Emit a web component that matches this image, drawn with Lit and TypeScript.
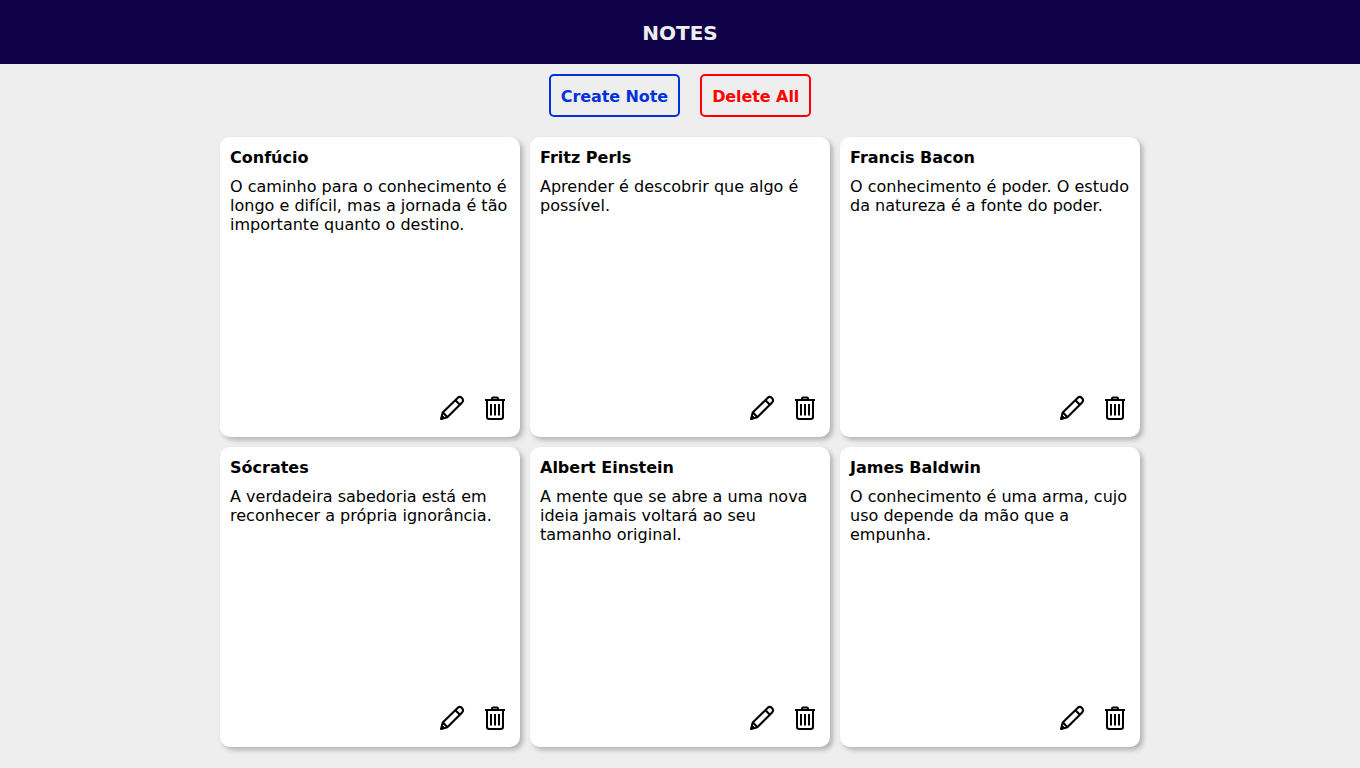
import { LitElement, html, css } from "lit";
import { customElement, property } from "lit/decorators.js";

interface Note {
  title: string;
  text: string;
}

const NOTES: Note[] = [
  { title: "Confúcio", text: "O caminho para o conhecimento é longo e difícil, mas a jornada é tão importante quanto o destino." },
  { title: "Fritz Perls", text: "Aprender é descobrir que algo é possível." },
  { title: "Francis Bacon", text: "O conhecimento é poder. O estudo da natureza é a fonte do poder." },
  { title: "Sócrates", text: "A verdadeira sabedoria está em reconhecer a própria ignorância." },
  { title: "Albert Einstein", text: "A mente que se abre a uma nova ideia jamais voltará ao seu tamanho original." },
  { title: "James Baldwin", text: "O conhecimento é uma arma, cujo uso depende da mão que a empunha." },
];

const pencilIcon = html`<svg width="26" height="26" viewBox="0 0 26 26" fill="none" stroke="#000" stroke-width="2.1" stroke-linejoin="round">
  <path d="M2.1 24L3.7 17.6L18.6 2.9C20 1.7 21.6 1.7 22.9 2.9C24.3 4.3 24.3 6 23.1 7.4L8.3 22.2Z"/>
  <path d="M16.4 5.3L20.7 9.6M3.9 17.6L8.3 22"/>
  <path d="M1.9 24.2L3 20.1L5.9 23.1Z" fill="#000" stroke-width="1"/>
</svg>`;

const trashIcon = html`<svg width="26" height="26" viewBox="0 0 26 26" fill="none" stroke="#000" stroke-width="2">
  <path d="M3 5H23M10 5V3.6Q10 2.4 11.2 2.4H14.8Q16 2.4 16 3.6V5"/>
  <path d="M5 5V21.8Q5 24 7.2 24H18.8Q21 24 21 21.8V5"/>
  <path d="M9 9V20.5M13 9V20.5M17 9V20.5"/>
</svg>`;

@customElement("note-card")
export class NoteCard extends LitElement {
  @property({ attribute: false }) note!: Note;

  static styles = css`
    :host {
      display: flex;
      flex-direction: column;
      box-sizing: border-box;
      height: 300px;
      padding: 10px;
      background: #fff;
      border-radius: 10px;
      box-shadow: 3px 3px 5px rgba(0, 0, 0, 0.25);
      color: #000;
    }
    .title {
      margin: 0 0 8px;
      font-size: 16px;
      line-height: 22px;
      font-weight: 700;
    }
    .text {
      margin: 0;
      flex: 1;
      font-size: 16px;
      line-height: 19px;
      letter-spacing: 0.01px;
    }
    .actions {
      display: flex;
      justify-content: flex-end;
      gap: 17px;
      padding: 0 2px 6px 0;
    }
    button {
      display: block;
      padding: 0;
      border: 0;
      background: none;
      cursor: pointer;
    }
    svg {
      display: block;
    }
  `;

  render() {
    return html`
      <h2 class="title">${this.note.title}</h2>
      <p class="text">${this.note.text}</p>
      <div class="actions">
        <button aria-label="Edit">${pencilIcon}</button>
        <button aria-label="Delete">${trashIcon}</button>
      </div>
    `;
  }
}

@customElement("app-root")
export class AppRoot extends LitElement {
  static styles = css`
    :host {
      display: block;
      min-height: 768px;
      background: #eee;
      font-family: Verdana, "DejaVu Sans", sans-serif;
    }
    .header {
      display: flex;
      align-items: center;
      justify-content: center;
      height: 64px;
      background: #0f0249;
    }
    .heading {
      margin: 0;
      padding-top: 2px;
      font-size: 20px;
      line-height: 24px;
      font-weight: 700;
      color: #eee;
    }
    .toolbar {
      display: flex;
      justify-content: center;
      gap: 20px;
      padding: 10px 0 20px;
    }
    .button {
      box-sizing: border-box;
      height: 43px;
      padding: 2px 10px 0;
      border: 2px solid;
      border-radius: 5px;
      background: none;
      font: inherit;
      font-size: 16px;
      font-weight: 700;
      letter-spacing: -0.08px;
      cursor: pointer;
    }
    .create {
      color: #0432d8;
    }
    .delete {
      color: #f00;
    }
    .grid {
      display: grid;
      grid-template-columns: repeat(3, 300px);
      justify-content: center;
      gap: 10px;
    }
  `;

  render() {
    return html`
      <header class="header"><h1 class="heading">NOTES</h1></header>
      <div class="toolbar">
        <button class="button create">Create Note</button>
        <button class="button delete">Delete All</button>
      </div>
      <main class="grid">
        ${NOTES.map((note) => html`<note-card .note=${note}></note-card>`)}
      </main>
    `;
  }
}
